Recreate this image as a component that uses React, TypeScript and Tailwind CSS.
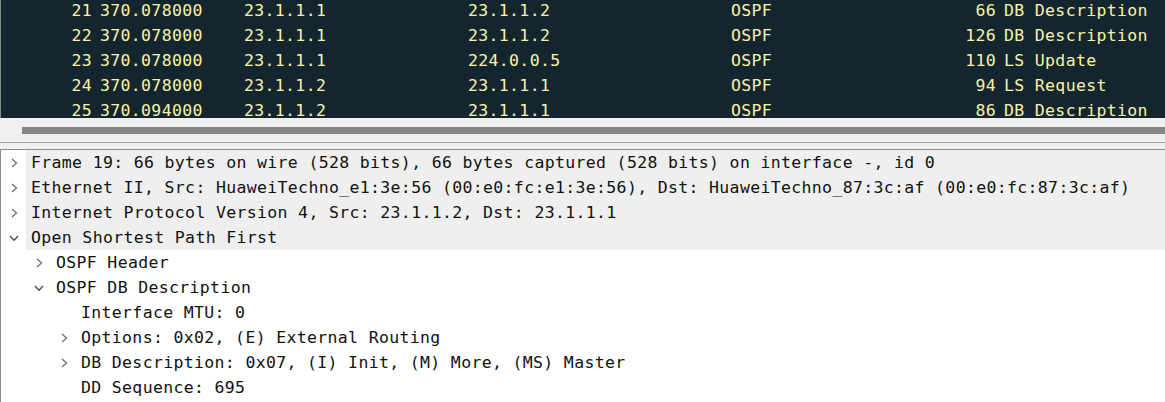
import React from "react";

const packets: string[][] = [
  ["21", "370.078000", "23.1.1.1", "23.1.1.2", "OSPF", "66", "DB Description"],
  ["22", "370.078000", "23.1.1.1", "23.1.1.2", "OSPF", "126", "DB Description"],
  ["23", "370.078000", "23.1.1.1", "224.0.0.5", "OSPF", "110", "LS Update"],
  ["24", "370.078000", "23.1.1.2", "23.1.1.1", "OSPF", "94", "LS Request"],
  ["25", "370.094000", "23.1.1.2", "23.1.1.1", "OSPF", "86", "DB Description"],
];

type Node = { level: number; text: string; arrow: "right" | "down" | null };

const tree: Node[] = [
  { level: 0, arrow: "right", text: "Frame 19: 66 bytes on wire (528 bits), 66 bytes captured (528 bits) on interface -, id 0" },
  { level: 0, arrow: "right", text: "Ethernet II, Src: HuaweiTechno_e1:3e:56 (00:e0:fc:e1:3e:56), Dst: HuaweiTechno_87:3c:af (00:e0:fc:87:3c:af)" },
  { level: 0, arrow: "right", text: "Internet Protocol Version 4, Src: 23.1.1.2, Dst: 23.1.1.1" },
  { level: 0, arrow: "down", text: "Open Shortest Path First" },
  { level: 1, arrow: "right", text: "OSPF Header" },
  { level: 1, arrow: "down", text: "OSPF DB Description" },
  { level: 2, arrow: null, text: "Interface MTU: 0" },
  { level: 2, arrow: "right", text: "Options: 0x02, (E) External Routing" },
  { level: 2, arrow: "right", text: "DB Description: 0x07, (I) Init, (M) More, (MS) Master" },
  { level: 2, arrow: null, text: "DD Sequence: 695" },
];

function Chevron({ dir }: { dir: "right" | "down" }) {
  return (
    <svg width="12" height="12" viewBox="0 0 12 12" className="block">
      {dir === "right" ? (
        <polyline points="4,2 8.5,6 4,10" fill="none" stroke="#6f6f6f" strokeWidth="1.3" />
      ) : (
        <polyline points="2,4 6,8.2 10,4" fill="none" stroke="#4a4a4a" strokeWidth="1.3" />
      )}
    </svg>
  );
}

export default function App() {
  return (
    <div className="w-[1165px] h-[402px] overflow-hidden flex flex-col bg-[#f0f0f0] font-['DejaVu_Sans_Mono',monospace] text-[16.5px] tracking-[0.34px]">
      <div className="h-[118px] shrink-0 overflow-hidden bg-[#132630] border-l border-[#8a8a8a] text-[#f9f3a6] leading-[15px]">
        <div className="-mt-[2px]">
          {packets.map((p) => (
            <div key={p[0]} className="h-[25px] flex items-center whitespace-pre">
              <div className="w-[91px] text-right">{p[0]}</div>
              <div className="ml-[8px] w-[144px]">{p[1]}</div>
              <div className="w-[224px]">{p[2]}</div>
              <div className="w-[263px]">{p[3]}</div>
              <div className="w-[180px]">{p[4]}</div>
              <div className="w-[85px] text-right">{p[5]}</div>
              <div className="ml-[8px]">{p[6]}</div>
            </div>
          ))}
        </div>
      </div>
      <div className="h-[24px] shrink-0 flex items-center pl-[22px]">
        <div className="h-[7px] flex-1 bg-[#858585]" />
      </div>
      <div className="h-px shrink-0 bg-[#a0a0a0]" />
      <div className="h-[6px] shrink-0" />
      <div className="flex-1 bg-white border-t border-l border-[#8c8c8c] text-[#111]">
        {tree.map((n, i) => (
          <div key={i} className="h-[25px] flex items-stretch whitespace-pre">
            <div style={{ width: n.level * 25 }} className="shrink-0" />
            <div className="w-[25px] shrink-0 flex items-center justify-center pt-[1px]">
              {n.arrow && <Chevron dir={n.arrow} />}
            </div>
            <div className={`flex-1 flex items-center pl-[5px] pt-[2px] ${n.level === 0 ? "bg-[#efefef]" : ""}`}>
              {n.text}
            </div>
          </div>
        ))}
      </div>
    </div>
  );
}
